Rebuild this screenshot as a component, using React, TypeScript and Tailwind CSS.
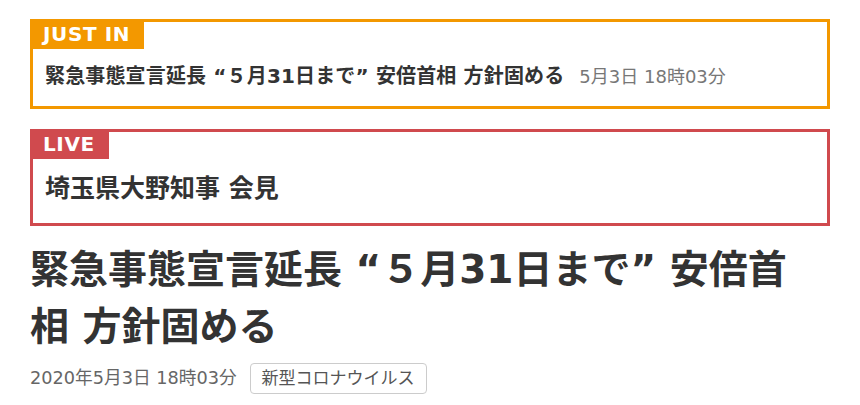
import React from 'react';

const jp = { fontFamily: '"DejaVu Sans", "Noto Sans CJK JP", sans-serif' };

const AlertBox: React.FC<{ label: string; color: string; children: React.ReactNode; big?: boolean }> = ({ label, color, children, big }) => {
  const border = color === 'orange' ? 'border-[#f39800]' : 'border-[#d04a4e]';
  const bg = color === 'orange' ? 'bg-[#f39800]' : 'bg-[#d04a4e]';
  return (
    <div className={`border-[3px] ${border} bg-white`}>
      <div className="flex">
        <div className={`${bg} -mt-[3px] -ml-[3px] h-[30px] pl-[13px] pr-[14px] flex items-center text-white font-bold text-[20px] tracking-[0.6px] leading-none`}>
          {label}
        </div>
      </div>
      <div className={big ? 'pl-[12px] pt-[12px] pb-[16px]' : 'pl-[12px] pt-[12px] pb-[14px]'}>{children}</div>
    </div>
  );
};

export default function App() {
  return (
    <div className="w-[860px] h-[405px] bg-white overflow-hidden pt-[19px] px-[30px]" style={jp}>
      <div className="w-[800px]">
        <AlertBox label="JUST IN" color="orange">
          <div className="flex items-baseline leading-[30px]">
            <span className="text-[20px] tracking-[0.15px] font-bold text-[#333]">緊急事態宣言延長 “５月31日まで” 安倍首相 方針固める</span>
            <span className="ml-[15px] text-[18px] text-[#777]">5月3日 18時03分</span>
          </div>
        </AlertBox>
        <div className="mt-[20px]">
          <AlertBox label="LIVE" color="red" big>
            <div className="text-[25px] leading-[36px] font-bold text-[#333]">埼玉県大野知事 会見</div>
          </AlertBox>
        </div>
        <h1 className="mt-[15px] w-[790px] text-[39px] leading-[57px] font-bold text-[#333]">
          緊急事態宣言延長 “５月31日まで” 安倍首相 方針固める
        </h1>
        <div className="mt-[8px] flex items-center">
          <span className="text-[17.7px] text-[#666]">2020年5月3日 18時03分</span>
          <span className="ml-[13px] h-[31px] px-[11px] flex items-center border border-[#ccc] rounded-[4px] text-[17px] text-[#555]">
            新型コロナウイルス
          </span>
        </div>
      </div>
    </div>
  );
}
